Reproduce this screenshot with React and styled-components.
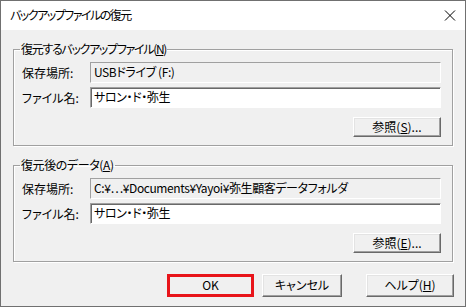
import styled, { createGlobalStyle } from "styled-components";

const GlobalStyle = createGlobalStyle`
  html, body {
    margin: 0;
    padding: 0;
    background: #f0f0f0;
  }
  * {
    box-sizing: border-box;
  }
`;

const Window = styled.div`
  width: 466px;
  height: 307px;
  border: 1px solid #707070;
  background: #f0f0f0;
  font-family: "Noto Sans CJK JP", "Liberation Sans", sans-serif;
  font-size: 12px;
  font-feature-settings: "palt";
  color: #000;
  display: flex;
  flex-direction: column;
`;

const TitleBar = styled.div`
  height: 29px;
  background: #fff;
  display: flex;
  align-items: center;
  justify-content: space-between;
  padding: 0 9px 1px 9px;
  line-height: 14px;
`;

const Title = styled.span`
  letter-spacing: -1.5px;
`;

const CloseIcon = () => (
  <svg width="12" height="11" viewBox="0 0 12 11">
    <path d="M1 0.5 L11 10.5 M11 0.5 L1 10.5" stroke="#000" strokeWidth="1" fill="none" />
  </svg>
);

const Group = styled.fieldset`
  margin: 12px 12px 0 12px;
  padding: 6px 11px 8px 8px;
  border: 1px solid #a0a0a0;
  box-shadow: 1px 1px 0 #fff, inset 1px 1px 0 #fff;
  min-width: 0;
  display: flex;
  flex-direction: column;
  gap: 4px;
`;

const Legend = styled.legend`
  margin-left: -2px;
  padding: 0 1px;
  line-height: 14px;
  height: 14px;
  letter-spacing: ${(p) => p.$spacing}px;
`;

const Row = styled.div`
  display: flex;
  align-items: center;
  height: 21px;
`;

const Label = styled.div`
  width: 68px;
  flex: none;
  line-height: 14px;
`;

const Field = styled.div`
  flex: 1;
  height: 21px;
  display: flex;
  align-items: center;
  padding: 0 3px 1px;
  white-space: nowrap;
  overflow: hidden;
  line-height: 14px;
  letter-spacing: -0.4px;
  border: 1px solid;
  border-color: #a0a0a0 #fff #fff #a0a0a0;
  background: ${(p) => (p.$editable ? "#fff" : "#f0f0f0")};
  box-shadow: ${(p) => (p.$editable ? "inset 1px 1px 0 #696969" : "none")};
`;

const ButtonRow = styled.div`
  display: flex;
  justify-content: flex-end;
  margin-top: 5px;
`;

const Button = styled.button`
  width: ${(p) => p.$w || 88}px;
  height: ${(p) => p.$h || 20}px;
  padding: 0 0 1px;
  margin: 0;
  font: inherit;
  font-feature-settings: "palt";
  line-height: 14px;
  color: #000;
  background: #f0f0f0;
  border: 1px solid;
  border-color: #fff #696969 #696969 #fff;
  box-shadow: inset -1px -1px 0 #a0a0a0, inset 1px 1px 0 #e3e3e3;
  display: flex;
  align-items: center;
  justify-content: center;
  flex: none;
`;

const Key = styled.span`
  text-decoration: underline;
  text-underline-offset: 1px;
`;

const Footer = styled.div`
  display: flex;
  justify-content: flex-end;
  align-items: center;
  padding: 12px 11px 0 0;
  gap: 8px;
`;

const Highlight = styled.div`
  width: 87px;
  height: 23px;
  border: 3px solid #e8141a;
  background: #f0f0f0;
  display: flex;
  align-items: center;
  justify-content: center;
  line-height: 14px;
  padding-bottom: 1px;
  flex: none;
`;

const HelpGap = styled.div`
  width: 8px;
  flex: none;
`;

function FileGroup({ title, hotkey, spacing, place, name, browseKey }) {
  return (
    <Group>
      <Legend $spacing={spacing}>
        {title}(<Key>{hotkey}</Key>)
      </Legend>
      <Row>
        <Label>保存場所:</Label>
        <Field>{place}</Field>
      </Row>
      <Row>
        <Label>ファイル名:</Label>
        <Field $editable>{name}</Field>
      </Row>
      <ButtonRow>
        <Button $w={88}>
          参照(<Key>{browseKey}</Key>)...
        </Button>
      </ButtonRow>
    </Group>
  );
}

export default function App() {
  return (
    <>
      <GlobalStyle />
      <Window>
        <TitleBar>
          <Title>バックアップファイルの復元</Title>
          <CloseIcon />
        </TitleBar>
        <FileGroup
          title="復元するバックアップファイル"
          hotkey="N"
          spacing={-1.3}
          place="USBドライブ (F:)"
          name="サロン・ド・弥生"
          browseKey="S"
        />
        <FileGroup
          title="復元後のデータ"
          hotkey="A"
          spacing={-0.4}
          place="C:¥…¥Documents¥Yayoi¥弥生顧客データフォルダ"
          name="サロン・ド・弥生"
          browseKey="E"
        />
        <Footer>
          <Highlight>OK</Highlight>
          <Button $w={80} $h={23}>キャンセル</Button>
          <HelpGap />
          <Button $w={88} $h={23}>
            ヘルプ(<Key>H</Key>)
          </Button>
        </Footer>
      </Window>
    </>
  );
}
